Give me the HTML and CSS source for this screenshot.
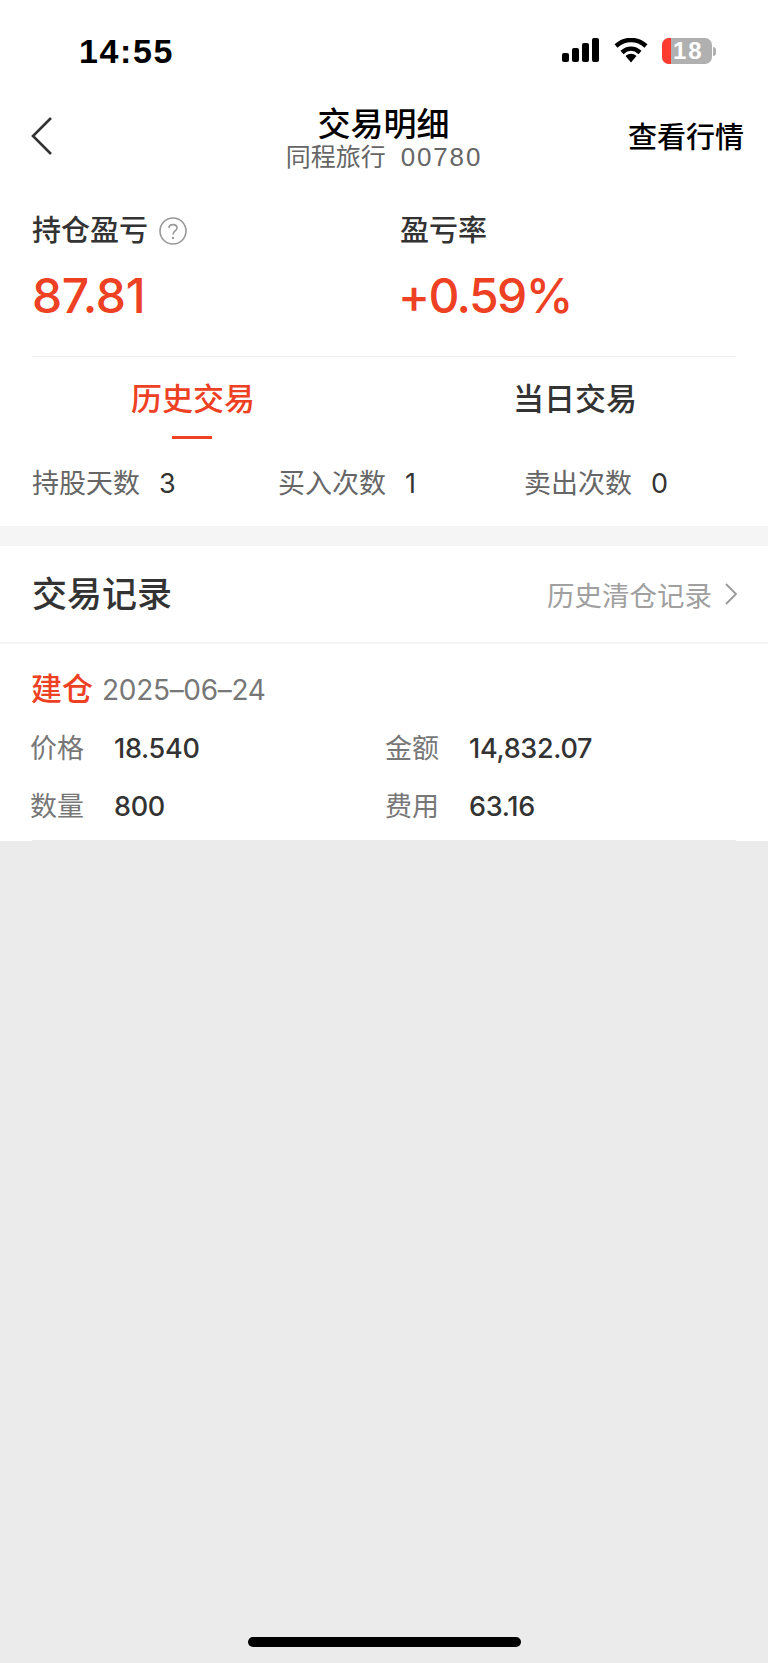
FILE: index.html
```html
<!DOCTYPE html>
<html lang="zh-CN">
<head>
    <meta charset="UTF-8">
    <meta name="viewport" content="width=device-width, initial-scale=1.0">
    <title>交易明细</title>
<link rel="stylesheet" href="styles.css">
</head>
<body>
<div class="phone">
    <div class="top-card">
        <div class="status-bar">
            <span class="time">14:55</span>
            <div class="status-icons">
                <svg class="signal" width="38" height="24" viewBox="0 0 38 24">
                    <rect x="0" y="15" width="7" height="9" rx="2"></rect>
                    <rect x="10" y="10" width="7" height="14" rx="2"></rect>
                    <rect x="20" y="5" width="7" height="19" rx="2"></rect>
                    <rect x="30" y="0" width="7" height="24" rx="2"></rect>
                </svg>
                <svg class="wifi" width="34" height="25" viewBox="0 0 34 25">
                    <path d="M2 8 C11 0 23 0 32 8" fill="none" stroke="#000" stroke-width="4.5"></path>
                    <path d="M8 14.5 C13.5 9.5 20.5 9.5 26 14.5" fill="none" stroke="#000" stroke-width="4.5"></path>
                    <path d="M11.5 18 C15 15 19 15 22.5 18 L17 24.5 Z"></path>
                </svg>
                <div class="battery">
                    <div class="battery-body">
                        <span class="battery-low"></span>
                        <span class="battery-num">18</span>
                    </div>
                    <span class="battery-tip"></span>
                </div>
            </div>
        </div>

        <div class="nav-bar">
            <svg class="back" width="22" height="38" viewBox="0 0 22 38">
                <path d="M20 1 L2 19 L20 37" fill="none" stroke="#333" stroke-width="2.6"></path>
            </svg>
            <div class="nav-title">
                <div class="title">交易明细</div>
                <div class="subtitle">同程旅行<span class="stock-code">00780</span></div>
            </div>
            <span class="nav-link">查看行情</span>
        </div>

        <div class="summary">
            <div class="summary-col">
                <div class="summary-label">持仓盈亏
                    <svg class="help" width="28" height="28" viewBox="0 0 28 28">
                        <circle cx="14" cy="14" r="13" fill="none" stroke="#999" stroke-width="1.6"></circle>
                        <path d="M10 11 C10 6.5 18 6.5 18 11 C18 14 14 14 14 17.5" fill="none" stroke="#999" stroke-width="1.6"></path>
                        <circle cx="14" cy="21" r="1.2" fill="#999"></circle>
                    </svg>
                </div>
                <div class="summary-value">87.81</div>
            </div>
            <div class="summary-col">
                <div class="summary-label">盈亏率</div>
                <div class="summary-value rate">+0.59%</div>
            </div>
        </div>

        <div class="tabs">
            <div class="tab active">历史交易</div>
            <div class="tab">当日交易</div>
        </div>

        <div class="stats">
            <div class="stat"><span class="stat-label">持股天数</span><span class="stat-num">3</span></div>
            <div class="stat"><span class="stat-label">买入次数</span><span class="stat-num">1</span></div>
            <div class="stat"><span class="stat-label">卖出次数</span><span class="stat-num">0</span></div>
        </div>
    </div>

    <div class="band"></div>

    <div class="records">
        <div class="records-head">
            <span class="records-title">交易记录</span>
            <span class="records-link">历史清仓记录
                <svg width="14" height="22" viewBox="0 0 14 22">
                    <path d="M2 1 L12 11 L2 21" fill="none" stroke="#999" stroke-width="1.8"></path>
                </svg>
            </span>
        </div>
        <div class="record">
            <div class="record-head"><span class="record-type">建仓</span><span class="record-date">2025–06–24</span></div>
            <div class="record-grid">
                <div class="cell"><span class="cell-label">价格</span><span class="cell-value">18.540</span></div>
                <div class="cell"><span class="cell-label">金额</span><span class="cell-value">14,832.07</span></div>
                <div class="cell"><span class="cell-label">数量</span><span class="cell-value">800</span></div>
                <div class="cell"><span class="cell-label">费用</span><span class="cell-value">63.16</span></div>
            </div>
        </div>
    </div>

    <div class="rest">
        <div class="home-bar"></div>
    </div>
</div>
</body>
</html>
```

FILE: styles.css
```css
* {
    box-sizing: border-box;
}
body {
    margin: 0;
    font-family: "Inter", "Noto Sans CJK SC", sans-serif;
    background-color: #ebebeb;
}
.phone {
    width: 768px;
    height: 1663px;
    display: flex;
    flex-direction: column;
    overflow: hidden;
}
.top-card {
    height: 526px;
    background-color: #fff;
}
.status-bar {
    height: 90px;
    padding: 32px 52px 0 79px;
    display: flex;
    justify-content: space-between;
}
.time {
    font-family: "Liberation Sans", sans-serif;
    font-size: 34px;
    font-weight: 700;
    line-height: 38px;
    color: #000;
    letter-spacing: 1.6px;
}
.status-icons {
    display: flex;
    align-items: flex-start;
    gap: 14px;
    padding-top: 6px;
}
.battery {
    display: flex;
    align-items: center;
    gap: 1px;
}
.battery-body {
    width: 50px;
    height: 26px;
    border-radius: 7px;
    background-color: #b0b0b0;
    display: flex;
}
.battery-low {
    width: 9px;
    border-radius: 7px 0 0 7px;
    background-color: #ff3b30;
}
.battery-num {
    padding-left: 2px;
    font-family: "Liberation Sans", sans-serif;
    font-size: 24px;
    font-weight: 700;
    line-height: 26px;
    letter-spacing: 2px;
    color: #fff;
}
.battery-tip {
    width: 3px;
    height: 9px;
    border-radius: 0 3px 3px 0;
    background-color: #b0b0b0;
}
.nav-bar {
    height: 90px;
    padding: 0 24px 0 31px;
    display: flex;
    justify-content: space-between;
    align-items: center;
    position: relative;
}
.nav-title {
    position: absolute;
    left: 0;
    right: 0;
    top: 18px;
    text-align: center;
}
.title {
    font-family: "Roboto", "Noto Sans CJK SC", sans-serif;
    font-size: 33px;
    font-weight: 500;
    line-height: 34px;
    margin-right: 1px;
    color: #000;
}
.subtitle {
    font-family: "Liberation Sans", "Noto Sans CJK SC", sans-serif;
    font-size: 25px;
    line-height: 30px;
    color: #666;
}
.stock-code {
    margin-left: 15px;
    font-size: 26px;
    letter-spacing: 1.8px;
}
.nav-link {
    font-size: 29px;
    font-weight: 500;
    color: #000;
}
.back {
    margin-top: 2px;
}
.summary {
    margin: 0 32px;
    height: 177px;
    padding-top: 34px;
    display: flex;
    border-bottom: 1px solid #f0f0f0;
}
.summary-col {
    width: 368px;
    flex: none;
}
.summary-label {
    display: flex;
    align-items: center;
    gap: 11px;
    font-size: 29px;
    font-weight: 500;
    line-height: 34px;
    color: #333;
}
.summary-label svg {
    flex: none;
}
.summary-value {
    margin-top: 20px;
    font-size: 48px;
    font-weight: 500;
    line-height: 56px;
    letter-spacing: -0.4px;
    color: #ee4023;
}
.summary-value.rate {
    margin-left: -2px;
    letter-spacing: -1.6px;
}
.tabs {
    display: flex;
    height: 83px;
    padding-left: 2px;
}
.tab {
    width: 382px;
    padding-top: 23px;
    font-size: 31px;
    font-weight: 500;
    line-height: 38px;
    text-align: center;
    color: #333;
    position: relative;
}
.tab.active {
    color: #ee4023;
}
.tab.active::after {
    content: "";
    position: absolute;
    left: 170px;
    top: 79px;
    width: 40px;
    height: 3px;
    background-color: #ee4023;
}
.stats {
    padding: 26px 0 0 32px;
    display: flex;
}
.stat {
    width: 246px;
    flex: none;
    display: flex;
    gap: 19px;
    font-size: 27px;
    line-height: 36px;
}
.stat-label {
    color: #666;
}
.stat-num {
    color: #333;
}
.band {
    height: 20px;
    background-color: #f5f5f5;
}
.records {
    height: 295px;
    background-color: #fff;
}
.records-head {
    height: 98px;
    padding: 0 30px 0 32px;
    display: flex;
    justify-content: space-between;
    align-items: center;
    border-bottom: 2px solid #f5f5f5;
}
.records-title {
    font-size: 35px;
    font-weight: 500;
    line-height: 38px;
    margin-bottom: 1px;
    color: #333;
}
.records-link {
    display: flex;
    align-items: center;
    gap: 12px;
    font-size: 27.5px;
    color: #a0a0a0;
}
.record {
    margin: 0 32px;
    height: 197px;
    padding-top: 24px;
    border-bottom: 1px solid #ececec;
}
.record-head {
    display: flex;
    align-items: center;
    gap: 9px;
    height: 40px;
    margin-left: -1px;
}
.record-type {
    font-size: 31px;
    font-weight: 500;
    margin-bottom: 4px;
    color: #ee4023;
}
.record-date {
    font-size: 28px;
    line-height: 44px;
    letter-spacing: -0.3px;
    margin-top: 4px;
    color: #777;
}
.record-grid {
    margin: 23px 0 0 -2px;
    display: grid;
    grid-template-columns: 355px 1fr;
    row-gap: 22px;
}
.cell {
    display: flex;
    gap: 30px;
    font-size: 27px;
    line-height: 36px;
}
.cell-label {
    color: #777;
}
.cell-value {
    font-weight: 500;
    letter-spacing: -0.3px;
    color: #333;
}
.rest {
    flex: 1;
    display: flex;
    justify-content: center;
    align-items: flex-end;
    padding-bottom: 16px;
}
.home-bar {
    width: 273px;
    height: 10px;
    border-radius: 5px;
    background-color: #000;
}
```
